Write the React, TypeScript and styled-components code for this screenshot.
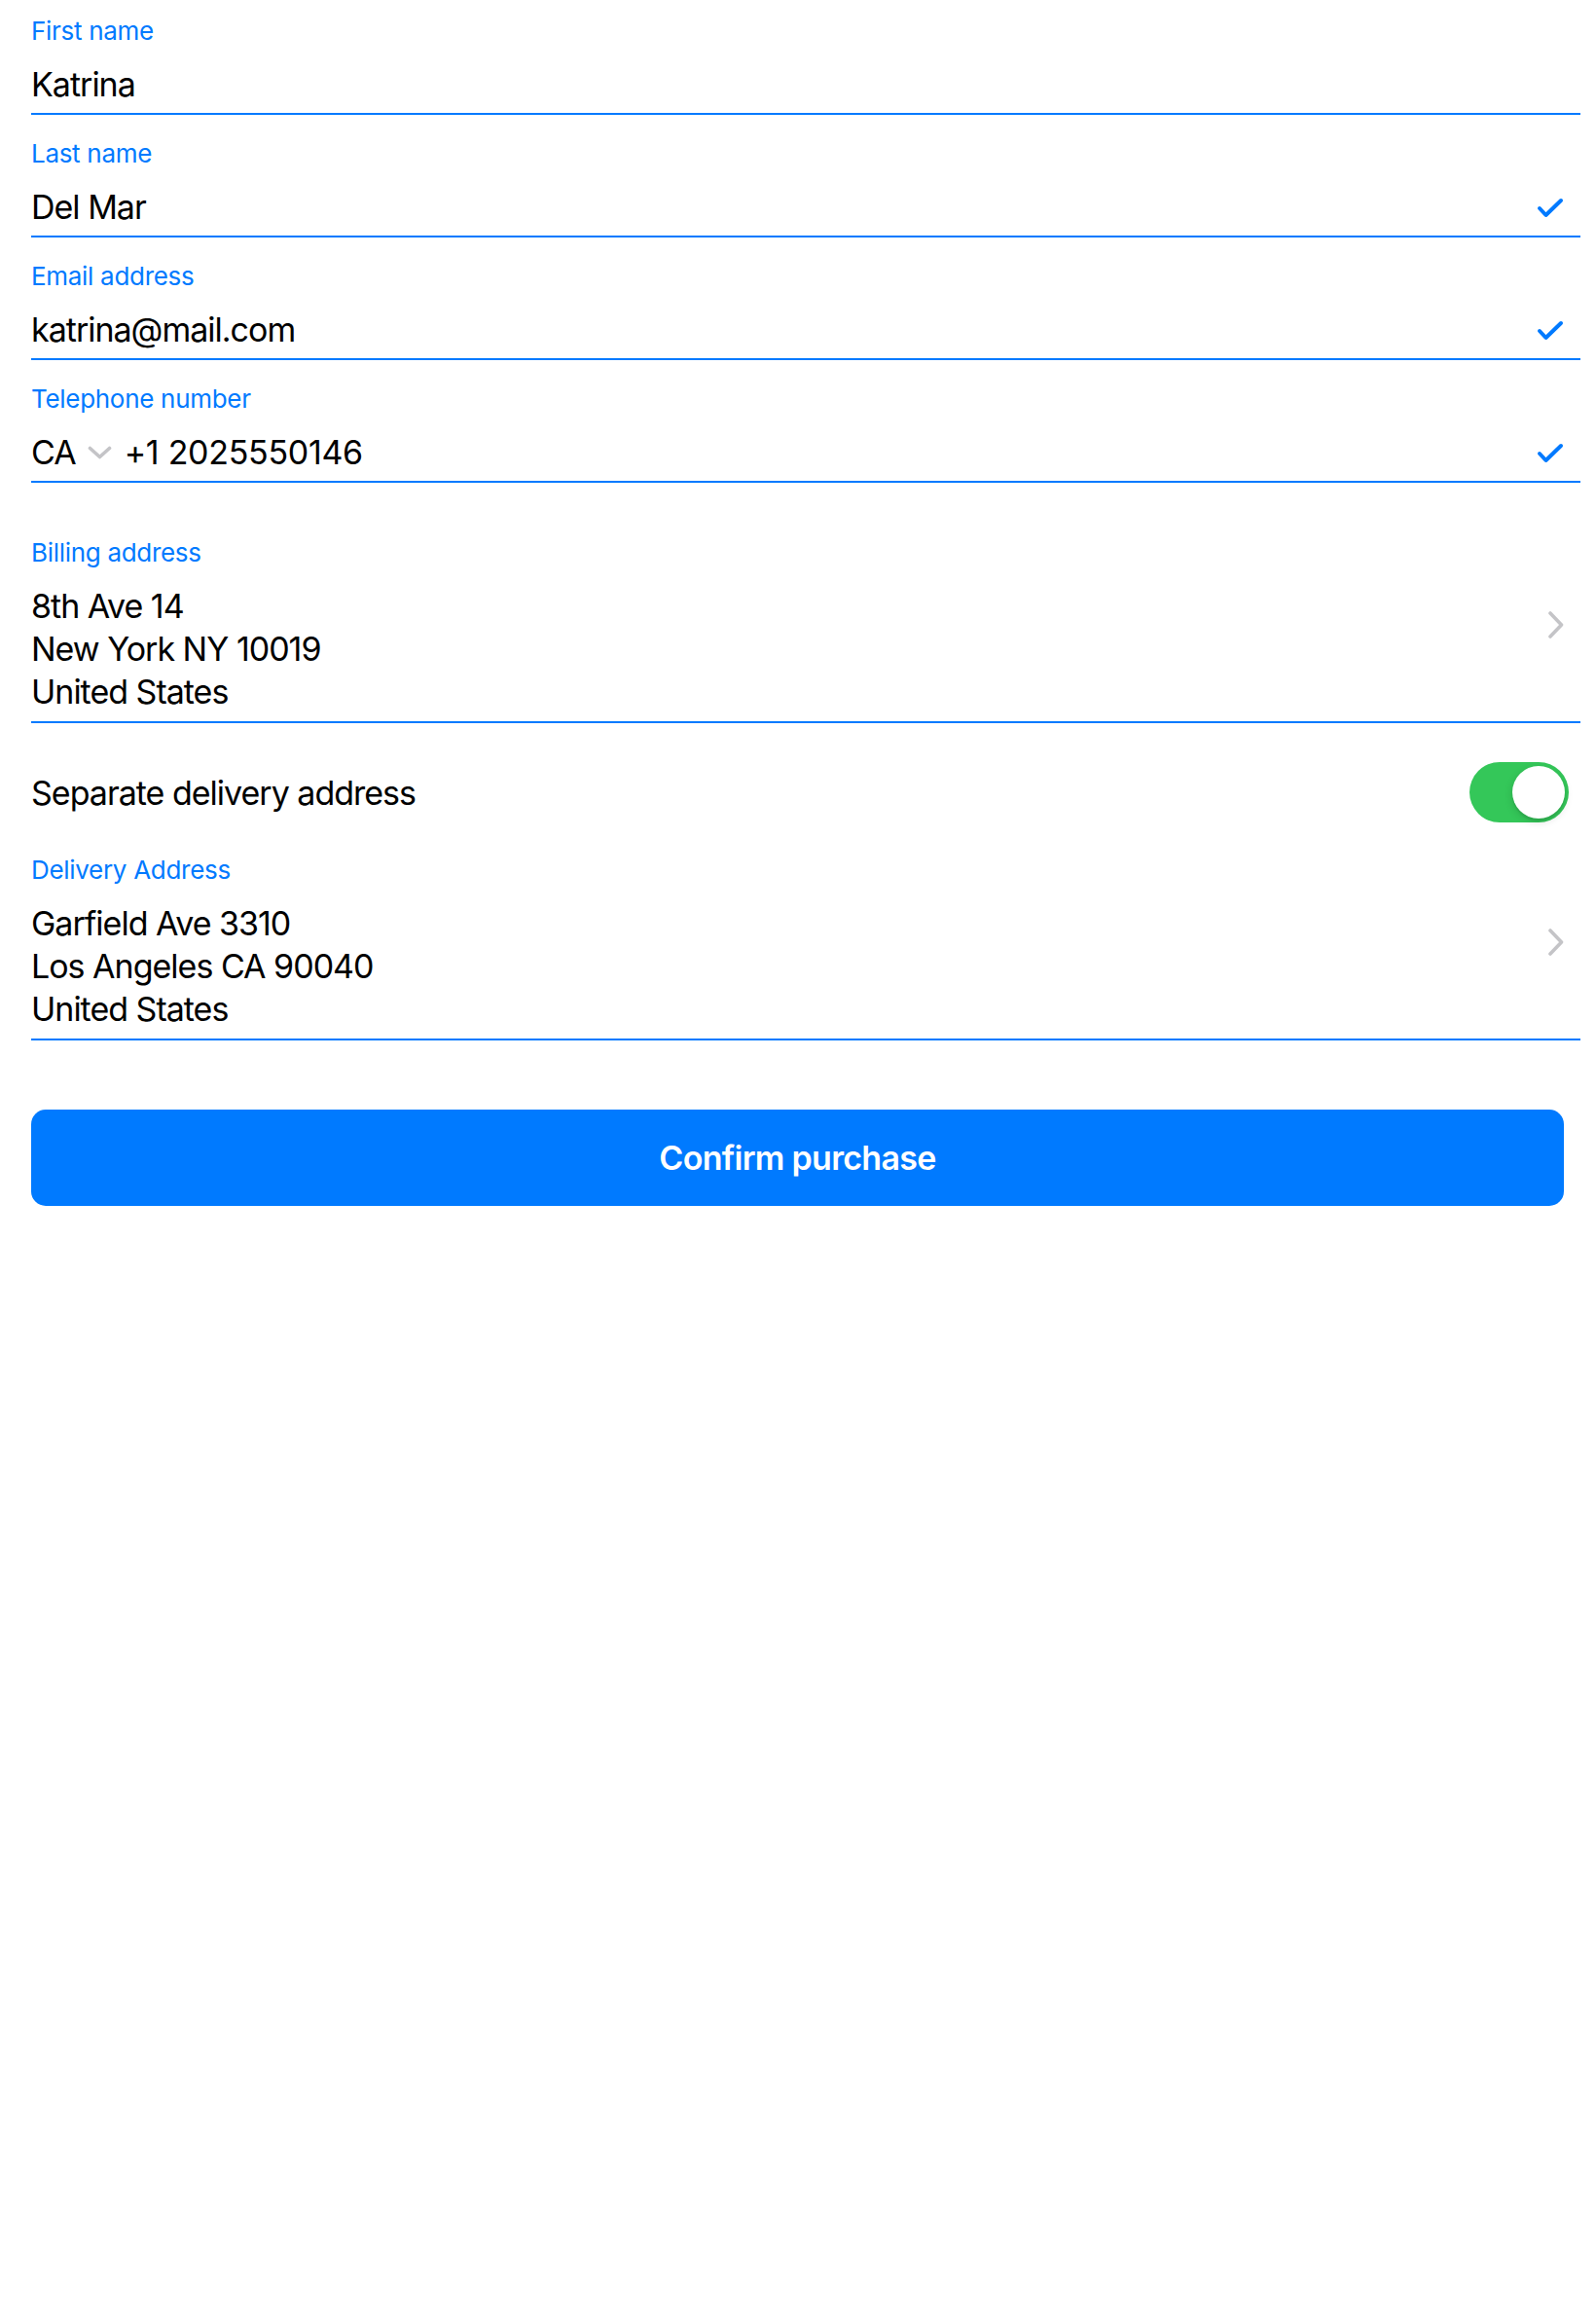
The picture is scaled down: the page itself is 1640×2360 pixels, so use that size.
import { FC, ReactNode } from 'react'
import styled, { createGlobalStyle } from 'styled-components'

const GlobalStyle = createGlobalStyle`
	body {
		margin: 0;
		background: #fff;
		font-family: Inter, 'Liberation Sans', sans-serif;
		-webkit-font-smoothing: antialiased;
	}
`

const Form = styled.main`
	display: flex;
	flex-direction: column;
	padding: 15px 16px 0 32px;
`

const Field = styled.section<{ $top?: number; $multiline?: boolean }>`
	display: flex;
	align-items: center;
	margin-top: ${(p) => p.$top ?? 0}px;
	padding: 0 17px ${(p) => (p.$multiline ? 8 : 7)}px 0;
	border-bottom: 2px solid #007aff;
`

const FieldMain = styled.div`
	flex: 1;
	display: flex;
	flex-direction: column;
`

const Label = styled.label`
	padding-top: 1px;
	font-size: 26px;
	line-height: 32px;
	color: #007aff;
	letter-spacing: -0.3px;
`

const ValueRow = styled.div`
	display: flex;
	align-items: center;
	justify-content: space-between;
	margin-top: 17px;
	height: 44px;
`

const Value = styled.span`
	display: flex;
	align-items: center;
	gap: 12px;
	font-size: 34px;
	line-height: 44px;
	letter-spacing: -1px;
	color: #000;
`

const PhoneNumber = styled.span`
	margin-left: 1px;
	letter-spacing: -0.3px;
`

const Address = styled.address`
	margin-top: 17px;
	font-style: normal;
	font-size: 34px;
	line-height: 44px;
	letter-spacing: -1px;
	color: #000;
`

const Chevron = styled.svg`
	flex-shrink: 0;
`

const ToggleRow = styled.div`
	display: flex;
	align-items: center;
	justify-content: space-between;
	height: 62px;
	margin-top: 40px;
	padding-right: 12px;
	font-size: 34px;
	letter-spacing: -1px;
	color: #000;
`

const Switch = styled.button<{ $on: boolean }>`
	position: relative;
	width: 102px;
	height: 62px;
	padding: 0;
	border: none;
	border-radius: 31px;
	background: ${(p) => (p.$on ? '#34c759' : '#e9e9eb')};

	&::after {
		content: '';
		position: absolute;
		top: 4px;
		left: ${(p) => (p.$on ? 44 : 4)}px;
		width: 54px;
		height: 54px;
		border-radius: 50%;
		background: #fff;
		box-shadow: 0 3px 8px rgba(0, 0, 0, 0.15), 0 3px 1px rgba(0, 0, 0, 0.06);
	}
`

const ConfirmButton = styled.button`
	margin: 71px 17px 0 0;
	height: 99px;
	border: none;
	border-radius: 15px;
	background: #007aff;
	color: #fff;
	font-family: Inter, 'Liberation Sans', sans-serif;
	font-size: 34px;
	font-weight: 600;
	letter-spacing: -0.7px;
`

const Check = () => (
	<svg width='28' height='21' viewBox='0 0 28 21' fill='none'>
		<path
			d='M3 11 L9.5 18 L25 3'
			stroke='#007aff'
			strokeWidth='4'
			strokeLinecap='round'
			strokeLinejoin='round'
		/>
	</svg>
)

const DownChevron = () => (
	<svg width='25' height='14' viewBox='0 0 25 14' fill='none'>
		<path
			d='M2.5 2.5 L12.5 11.5 L22.5 2.5'
			stroke='#c4c4c7'
			strokeWidth='3.6'
			strokeLinecap='round'
			strokeLinejoin='round'
		/>
	</svg>
)

const TextField: FC<{ label: string; top?: number; valid?: boolean; children: ReactNode }> = ({
	label,
	top,
	valid,
	children,
}) => (
	<Field $top={top}>
		<FieldMain>
			<Label>{label}</Label>
			<ValueRow>
				<Value>{children}</Value>
				{valid && <Check />}
			</ValueRow>
		</FieldMain>
	</Field>
)

const AddressField: FC<{ label: string; top: number; lines: string[] }> = ({ label, top, lines }) => (
	<Field $top={top} $multiline>
		<FieldMain>
			<Label>{label}</Label>
			<Address>
				{lines.map((line) => (
					<div key={line}>{line}</div>
				))}
			</Address>
		</FieldMain>
		<Chevron width='16' height='28' viewBox='0 0 16 28' fill='none'>
			<path
				d='M2 2 L13.5 14 L2 26'
				stroke='#c4c4c7'
				strokeWidth='3.6'
				strokeLinecap='round'
				strokeLinejoin='round'
			/>
		</Chevron>
	</Field>
)

const App: FC = () => (
	<>
		<GlobalStyle />
		<Form>
			<TextField label='First name'>Katrina</TextField>
			<TextField label='Last name' top={23} valid>
				Del Mar
			</TextField>
			<TextField label='Email address' top={23} valid>
				katrina@mail.com
			</TextField>
			<TextField label='Telephone number' top={23} valid>
				CA
				<DownChevron />
				<PhoneNumber>+1 2025550146</PhoneNumber>
			</TextField>
			<AddressField
				label='Billing address'
				top={55}
				lines={['8th Ave 14', 'New York NY 10019', 'United States']}
			/>
			<ToggleRow>
				Separate delivery address
				<Switch $on aria-label='Separate delivery address' />
			</ToggleRow>
			<AddressField
				label='Delivery Address'
				top={32}
				lines={['Garfield Ave 3310', 'Los Angeles CA 90040', 'United States']}
			/>
			<ConfirmButton>Confirm purchase</ConfirmButton>
		</Form>
	</>
)

export default App
